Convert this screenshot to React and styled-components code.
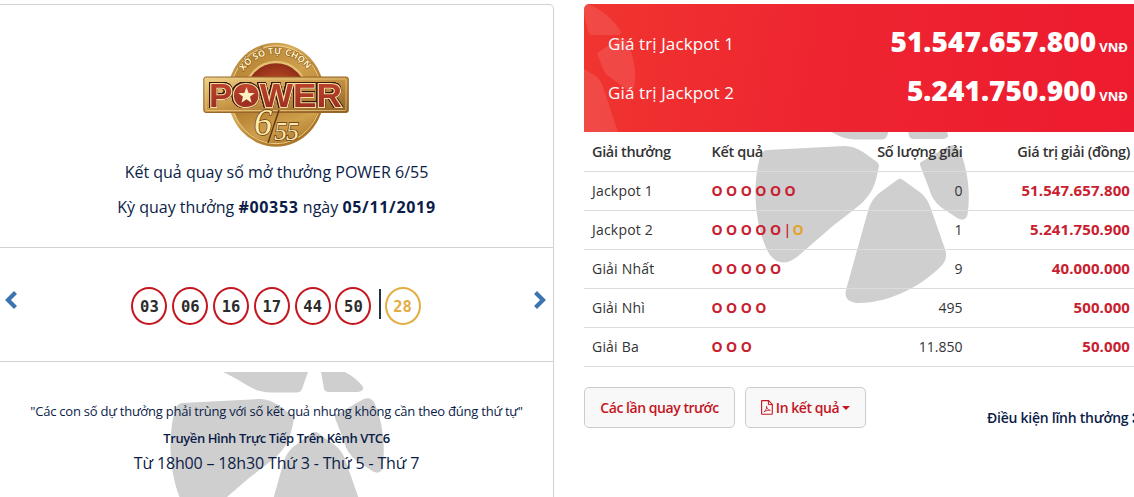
import React from 'react';
import styled, { createGlobalStyle } from 'styled-components';

const results = ['03', '06', '16', '17', '44', '50'];

const prizes = [
  { name: 'Jackpot 1', match: 6, count: '0', value: '51.547.657.800' },
  { name: 'Jackpot 2', match: 5, bonus: true, count: '1', value: '5.241.750.900' },
  { name: 'Giải Nhất', match: 5, count: '9', value: '40.000.000' },
  { name: 'Giải Nhì', match: 4, count: '495', value: '500.000' },
  { name: 'Giải Ba', match: 3, count: '11.850', value: '50.000' },
];

function Petals() {
  return (
    <svg width="216" height="185" viewBox="0 0 216 185" fill="#cfcfcf">
      <path d="M53 0C68 7 80 16 88 18.5Q95 20.5 100 20.5L127 20.5Q131 20 132 17L138 0Z" />
      <path d="M151 0L154 17Q155 20 159 20L188 20Q195 19 192.5 14Q185 5 175 0Z" />
      <path d="M12 31L90 27Q99 27 108 33L122 43Q125 45.5 123.5 49C120 68 117 73 108 83Q104 87 79 106L42 138Q26 150 15 136C2 115 -1 80 1 62Q2 48 5 38Q7 31.5 12 31Z" />
      <path d="M142 61Q145 58.5 148 61L166 74Q173 80 176 90L190 130Q193 139 188 145C170 165 135 185 101 184Q88 182 91 171L113 92Q116 81 123 75Z" />
      <path d="M166 43L191 28.5Q200 23 204.5 31C212 48 216 72 212.5 96Q210 103 203 99.5L187 89Q177 82 173.5 68L165 46Q164.500 44 166 43Z" />
    </svg>
  );
}

function PowerLogo() {
  return (
    <svg width="147" height="106" viewBox="0 0 147 106">
      <defs>
        <linearGradient id="gold" x1="0" y1="0" x2="1" y2="1">
          <stop offset="0" stopColor="#a9772c" />
          <stop offset=".35" stopColor="#d9ae5c" />
          <stop offset=".6" stopColor="#b98435" />
          <stop offset="1" stopColor="#a06a22" />
        </linearGradient>
        <linearGradient id="face" x1="0" y1="0" x2="1" y2="1">
          <stop offset="0" stopColor="#b17b2e" />
          <stop offset=".5" stopColor="#cf9f4c" />
          <stop offset="1" stopColor="#a87329" />
        </linearGradient>
        <linearGradient id="plate" x1="0" y1="0" x2="1" y2="1">
          <stop offset="0" stopColor="#f0d48a" />
          <stop offset=".5" stopColor="#c79445" />
          <stop offset="1" stopColor="#8d5c22" />
        </linearGradient>
        <linearGradient id="ruby" x1="0" y1="0" x2="0" y2="1">
          <stop offset="0" stopColor="#c2452e" />
          <stop offset="1" stopColor="#962c20" />
        </linearGradient>
        <radialGradient id="dome" cx=".5" cy=".45" r=".5">
          <stop offset="0" stopColor="#d0562c" />
          <stop offset="1" stopColor="#8a2a16" />
        </radialGradient>
        <path id="arc" d="M39.500 31A39.500 39.500 0 0 1 107 31" />
      </defs>
      <ellipse cx="73" cy="52.700" rx="48.300" ry="52" fill="url(#gold)" />
      <ellipse cx="73" cy="52.700" rx="45.500" ry="49" fill="none" stroke="#ecd08a" strokeWidth="1" />
      <ellipse cx="73" cy="52.700" rx="44.500" ry="48" fill="url(#face)" />
      <ellipse cx="73" cy="52.700" rx="32.500" ry="34" fill="#e4c274" />
      <ellipse cx="73" cy="52.700" rx="30.500" ry="31.500" fill="url(#dome)" />
      <path d="M31.500 70H114.500A44.500 48 0 0 1 31.500 70Z" fill="url(#face)" />
      <Ribbon>
        <textPath href="#arc" startOffset="2" textLength="74">XỔ SỐ TỰ CHỌN</textPath>
      </Ribbon>
      <rect x=".8" y="35" width="144.500" height="35.500" rx="2" fill="url(#plate)" stroke="#96662a" />
      <rect x="3" y="37" width="140" height="31.500" rx="1" fill="none" stroke="#e9c981" strokeWidth=".8" />
      <Brand x="6" y="65" textLength="133" lengthAdjust="spacingAndGlyphs">POWER</Brand>
      <circle cx="43.500" cy="53" r="10" fill="url(#ruby)" />
      <path d="M43.500 45L45.700 50.900L51.700 51.100L47 54.800L48.600 60.700L43.500 57.300L38.400 60.700L40 54.800L35.300 51.100L41.300 50.900Z" fill="#fff0c4" />
      <Script x="51" y="92.500" fontSize="38" textLength="18" lengthAdjust="spacingAndGlyphs">6</Script>
      <path d="M76 68L65 101" stroke="#5d3510" strokeWidth="1.400" />
      <Script x="71" y="97.500" fontSize="26" textLength="25">55</Script>
    </svg>
  );
}

function Arrow({ flip }) {
  return (
    <svg width="14" height="20" viewBox="0 0 14 20">
      <path
        d={flip ? 'M2.500 2.500L10 10L2.500 17.500' : 'M11.500 2.500L4 10L11.500 17.500'}
        fill="none"
        stroke="#3c74b0"
        strokeWidth="4.200"
      />
    </svg>
  );
}

function PdfIcon() {
  return (
    <svg width="12" height="15" viewBox="0 0 12 15" fill="none" stroke="currentColor">
      <path d="M1.200 .6H7.500L11.300 4.400V13.400Q11.300 14.300 10.500 14.300H1.200Q.6 14.300 .6 13.600V1.200Q.6 .6 1.200 .6Z" strokeWidth="1.100" />
      <path d="M7.400 .8V4.600H11.200" strokeWidth="1" />
      <path d="M5.600 6.200C6 8.500 7 9.900 9.300 10.400C7 10 4.500 10.600 2.900 12C4.500 11 5.700 8.800 5.600 6.200Z" strokeWidth=".8" />
    </svg>
  );
}

export default function App() {
  return (
    <Page>
      <GlobalStyle />
      <DrawCard>
        <DrawHeader>
          <PowerLogo />
          <Title>Kết quả quay số mở thưởng POWER 6/55</Title>
          <SubTitle>Kỳ quay thưởng <b>#00353</b> ngày <b>05/11/2019</b></SubTitle>
        </DrawHeader>
        <DrawBody>
          <Arrow />
          <Balls>
            {results.map((n) => <Ball key={n}>{n}</Ball>)}
            <Bar />
            <Ball $bonus>28</Ball>
          </Balls>
          <Arrow flip />
        </DrawBody>
        <DrawFooter>
          <FooterMark><Petals /></FooterMark>
          <Note>"Các con số dự thưởng phải trùng với số kết quả nhưng không cần theo đúng thứ tự"</Note>
          <Channel>Truyền Hình Trực Tiếp Trên Kênh VTC6</Channel>
          <Schedule>Từ 18h00 – 18h30 Thứ 3 - Thứ 5 - Thứ 7</Schedule>
        </DrawFooter>
      </DrawCard>

      <PrizeColumn>
        <Jackpots>
          <JackpotMark>
            <svg width="54" height="128" viewBox="0 0 54 128" fill="#fff" fillOpacity=".11">
              <path d="M3 0Q22 6 36 26Q38 31 34 31L8 31Q5 31 4 27L0 10V0Z" />
              <path d="M13 49L35 35Q40 32 43 38C50 52 53 68 50 84Q48 88 42 85L27 74Q21 70 19 65Z" />
              <path d="M0 65L10 71Q16 75 18 80L34 128H0Z" />
            </svg>
          </JackpotMark>
          <JackpotRow>
            <JackpotLabel>Giá trị Jackpot 1</JackpotLabel>
            <JackpotValue>51.547.657.800<Unit>VNĐ</Unit></JackpotValue>
          </JackpotRow>
          <JackpotRow>
            <JackpotLabel>Giá trị Jackpot 2</JackpotLabel>
            <JackpotValue>5.241.750.900<Unit>VNĐ</Unit></JackpotValue>
          </JackpotRow>
        </Jackpots>

        <Table>
          <TableMark><Petals /></TableMark>
          <HeadRow>
            <span>Giải thưởng</span>
            <span>Kết quả</span>
            <Right>Số lượng giải</Right>
            <Right>Giá trị giải (đồng)</Right>
          </HeadRow>
          {prizes.map((p) => (
            <Row key={p.name}>
              <Name>{p.name}</Name>
              <Match>
                {Array.from({ length: p.match }, (_, i) => <Dot key={i}>O</Dot>)}
                {p.bonus && <Pipe>|</Pipe>}
                {p.bonus && <Dot $bonus>O</Dot>}
              </Match>
              <Right>{p.count}</Right>
              <Value>{p.value}</Value>
            </Row>
          ))}
        </Table>

        <Actions>
          <Button $width="151px">Các lần quay trước</Button>
          <Button $width="121px">
            <PdfIcon />
            In kết quả
            <Caret />
          </Button>
          <Terms>
            Điều kiện lĩnh thưởng
            <svg width="8" height="10" viewBox="0 0 8 10">
              <path d="M1 1L5.500 5L1 9" fill="none" stroke="#0b1c48" strokeWidth="2.400" />
            </svg>
          </Terms>
        </Actions>
      </PrizeColumn>
    </Page>
  );
}

const GlobalStyle = createGlobalStyle`
  * {
    box-sizing: border-box;
  }

  body {
    margin: 0;
    overflow: hidden;
    background: #fff;
    font-family: 'Open Sans', 'Noto Sans', sans-serif;
    font-stretch: 90%;
    color: #333;
  }
`;

const Ribbon = styled.text`
  font-family: 'Open Sans', sans-serif;
  font-size: 9px;
  font-weight: 700;
  fill: #fff0bd;
  stroke: #7c4a16;
  stroke-width: 1px;
  paint-order: stroke;
`;

const Brand = styled.text`
  font-family: 'Liberation Sans', sans-serif;
  font-size: 33px;
  font-weight: 700;
  fill: url(#ruby);
  stroke: #f8dfa2;
  stroke-width: 2.2px;
  paint-order: stroke;
  filter: drop-shadow(0.6px 0 0 #38170f) drop-shadow(-0.6px 0 0 #38170f)
    drop-shadow(0 0.6px 0 #38170f) drop-shadow(0 -0.6px 0 #38170f);
`;

const Script = styled.text`
  font-family: 'Liberation Serif', serif;
  font-style: italic;
  fill: #ffe9ab;
  stroke: #5d3510;
  stroke-width: 1.4px;
  paint-order: stroke;
`;

const Page = styled.div`
  display: flex;
  gap: 30px;
  width: 1134px;
  height: 497px;
  padding-top: 4px;
  overflow: hidden;
`;

const DrawCard = styled.div`
  display: flex;
  flex-direction: column;
  width: 554px;
  height: 520px;
  border: 1px solid #d2d2d2;
  border-left: 0;
  border-radius: 0 5px 0 0;
  color: #0b1c48;
`;

const DrawHeader = styled.div`
  display: flex;
  flex-direction: column;
  align-items: center;
  height: 243px;
  padding-top: 37px;
  border-bottom: 1px solid #d2d2d2;
`;

const Title = styled.div`
  margin-top: 12px;
  font-size: 16px;
  line-height: 25px;
  white-space: nowrap;
`;

const SubTitle = styled(Title)`
  margin-top: 10px;

  b {
    letter-spacing: 0.7px;
  }
`;

const DrawBody = styled.div`
  display: flex;
  align-items: center;
  justify-content: space-between;
  height: 114px;
  padding: 0 6px 0 4px;
  border-bottom: 1px solid #d2d2d2;

  > svg {
    margin-bottom: 10px;
  }
`;

const Balls = styled.div`
  display: flex;
  align-items: center;
  gap: 4.8px;
  margin: 3px 0 0 1px;
`;

const Ball = styled.span`
  width: 36px;
  height: 38px;
  border: 2px solid ${(p) => (p.$bonus ? '#e3ac3e' : '#c4161f')};
  border-radius: 50%;
  color: ${(p) => (p.$bonus ? '#e3ac3e' : '#2b2b2b')};
  font: bold 15.5px/36px 'DejaVu Sans Mono', monospace;
  text-align: center;
`;

const Bar = styled.span`
  width: 2px;
  height: 30px;
  margin: 0 -1px 4px 2.5px;
  background: #234;
`;

const DrawFooter = styled.div`
  position: relative;
  display: flex;
  flex-direction: column;
  align-items: center;
  padding-top: 39px;
  white-space: nowrap;
`;

const FooterMark = styled.div`
  position: absolute;
  z-index: -1;
  left: 170px;
  top: 10px;
`;

const Note = styled.div`
  font-size: 13px;
  letter-spacing: -0.23px;
  line-height: 20px;
`;

const Channel = styled.div`
  margin-top: 7px;
  font-size: 13px;
  font-weight: 600;
  letter-spacing: -0.42px;
  line-height: 20px;
`;

const Schedule = styled.div`
  margin-top: 3px;
  font-size: 16px;
  letter-spacing: -0.16px;
  line-height: 24px;
`;

const PrizeColumn = styled.div`
  flex: 1;
  min-width: 0;
`;

const Jackpots = styled.div`
  position: relative;
  height: 128px;
  padding: 12px 6px 0 24px;
  border-radius: 5px 0 0 0;
  overflow: hidden;
  background: linear-gradient(100deg, #f0352f 0%, #ee2430 45%, #ed1b2f 100%);
  color: #fff;
`;

const JackpotMark = styled.div`
  position: absolute;
  left: 0;
  top: 0;
`;

const JackpotRow = styled.div`
  position: relative;
  display: flex;
  align-items: center;
  justify-content: space-between;
  height: 49px;
`;

const JackpotLabel = styled.span`
  padding-top: 5px;
  font-size: 17px;
  letter-spacing: 0.12px;
`;

const JackpotValue = styled.span`
  font-size: 28px;
  font-weight: 800;
  font-stretch: 100%;
  letter-spacing: 0.07px;
`;

const Unit = styled.span`
  margin-left: 3px;
  font-size: 13px;
  font-weight: 700;
`;

const Table = styled.div`
  position: relative;
`;

const TableMark = styled.div`
  position: absolute;
  z-index: -1;
  left: 171px;
  top: -13px;
`;

const Row = styled.div`
  display: grid;
  grid-template-columns: 119.5px 120px 131px 167.5px;
  align-items: center;
  height: 39px;
  padding: 0 4px 2px 8px;
  border-bottom: 1px solid #dcdcdc;
  font-size: 14px;
  white-space: nowrap;
`;

const HeadRow = styled(Row)`
  height: 40px;
  padding-bottom: 0;
  font-size: 14.5px;
  font-weight: 600;
  letter-spacing: -0.35px;
`;

const Name = styled.span`
  letter-spacing: 0.2px;
`;

const Right = styled.span`
  text-align: right;
`;

const Value = styled(Right)`
  color: #c9202f;
  font-size: 15px;
  font-weight: 700;
  font-stretch: 100%;
  letter-spacing: 0.1px;
`;

const Match = styled.span`
  display: flex;
  color: #c9202f;
  font-weight: 700;
`;

const Dot = styled.span`
  width: 14.6px;
  ${(p) => p.$bonus && 'color: #e3a22e;'}
`;

const Pipe = styled.span`
  width: 9px;
  margin-left: -1px;
  font-weight: 600;
`;

const Actions = styled.div`
  display: flex;
  gap: 10px;
  padding-top: 20px;
`;

const Button = styled.button`
  display: flex;
  flex: none;
  align-items: center;
  justify-content: center;
  gap: 3px;
  width: ${(p) => p.$width};
  height: 41px;
  padding: 0;
  border: 1px solid #ccc;
  border-radius: 5px;
  background: #f8f8f8;
  color: #c4161f;
  font-family: inherit;
  font-size: 14px;
  font-weight: 600;
  font-stretch: inherit;
  letter-spacing: -0.45px;
  white-space: nowrap;
`;

const Caret = styled.span`
  border: 4px solid transparent;
  border-top-color: currentColor;
  border-bottom: 0;
`;

const Terms = styled.span`
  display: flex;
  flex: none;
  align-items: center;
  gap: 4px;
  height: 61px;
  margin-left: 111px;
  color: #0b1c48;
  font-size: 14px;
  font-weight: 600;
  letter-spacing: -0.25px;
  white-space: nowrap;
`;
